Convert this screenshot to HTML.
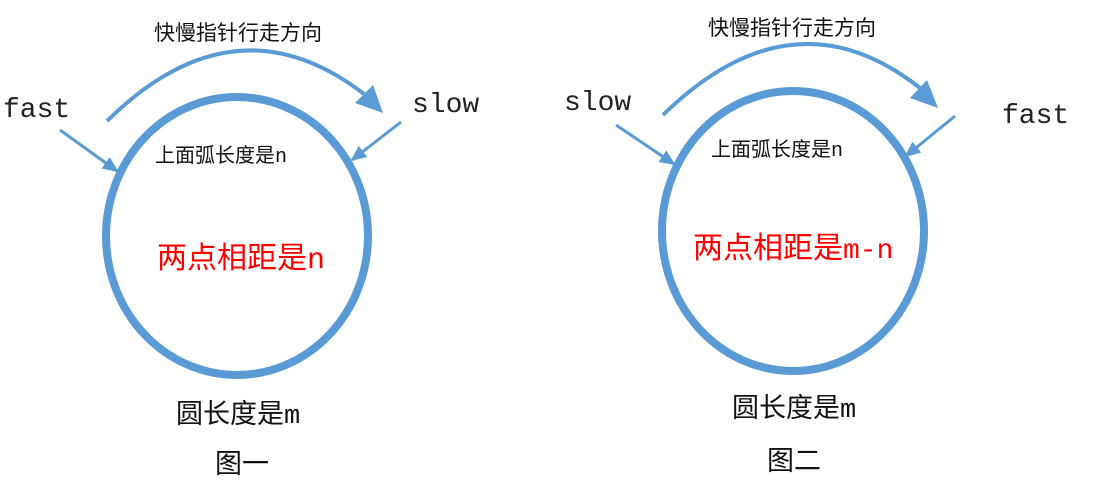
<!DOCTYPE html>
<html><head><meta charset="utf-8"><style>
html,body{margin:0;padding:0;background:#fff;width:1103px;height:483px;overflow:hidden}
svg{display:block}
.m{font-family:"Liberation Mono",monospace;fill:#222}
.c{font-family:"Liberation Sans","Noto Sans CJK SC",sans-serif;fill:#111}
.s{font-family:"Liberation Mono",monospace}
</style></head><body>
<svg width="1103" height="483" viewBox="0 0 1103 483">
<defs>
<marker id="a" markerWidth="16" markerHeight="14" refX="14" refY="7" orient="auto" markerUnits="userSpaceOnUse"><path d="M0,0 L16,7 L0,14 Z" fill="#5b9bd5"/></marker>
</defs>
<g stroke="#5b9bd5" fill="none">
<ellipse cx="237" cy="236" rx="131" ry="139" stroke-width="8"/>
<path d="M107,121 Q235,-5 364,94" stroke-width="4"/>
<path d="M60,130 L117,171" stroke-width="3" marker-end="url(#a)"/>
<path d="M401,122 L352,160" stroke-width="3" marker-end="url(#a)"/>
<ellipse cx="793" cy="231" rx="131" ry="140" stroke-width="8"/>
<path d="M663,115 Q793,-12 920,88" stroke-width="4"/>
<path d="M616,125 L674,164" stroke-width="3" marker-end="url(#a)"/>
<path d="M955,116 L906,156" stroke-width="3" marker-end="url(#a)"/>
</g>
<g fill="#5b9bd5">
<path d="M355,103 L373,85 L383,113 Z"/>
<path d="M910,98 L927,80 L938,108 Z"/>
</g>
<text class="c" x="154" y="40" font-size="21">快慢指针行走方向</text>
<text class="m" x="3" y="117" font-size="28">fast</text>
<text class="m" x="412" y="112" font-size="28">slow</text>
<text class="c" x="155" y="162" font-size="20">上面弧长度是<tspan class="s">n</tspan></text>
<text class="c" x="157" y="268" font-size="30" style="fill:#f00">两点相距是<tspan class="s" style="fill:#f00">n</tspan></text>
<text class="c" x="176" y="423" font-size="27">圆长度是<tspan class="s">m</tspan></text>
<text class="c" x="215" y="473" font-size="27">图一</text>
<text class="c" x="708" y="35" font-size="21">快慢指针行走方向</text>
<text class="m" x="564" y="110" font-size="28">slow</text>
<text class="m" x="1002" y="123" font-size="28">fast</text>
<text class="c" x="711" y="156" font-size="20">上面弧长度是<tspan class="s">n</tspan></text>
<text class="c" x="693" y="258" font-size="30" style="fill:#f00">两点相距是<tspan class="m" style="fill:#f00" font-size="28">m-n</tspan></text>
<text class="c" x="732" y="417" font-size="27">圆长度是<tspan class="s">m</tspan></text>
<text class="c" x="767" y="470" font-size="27">图二</text>
</svg>
</body></html>
